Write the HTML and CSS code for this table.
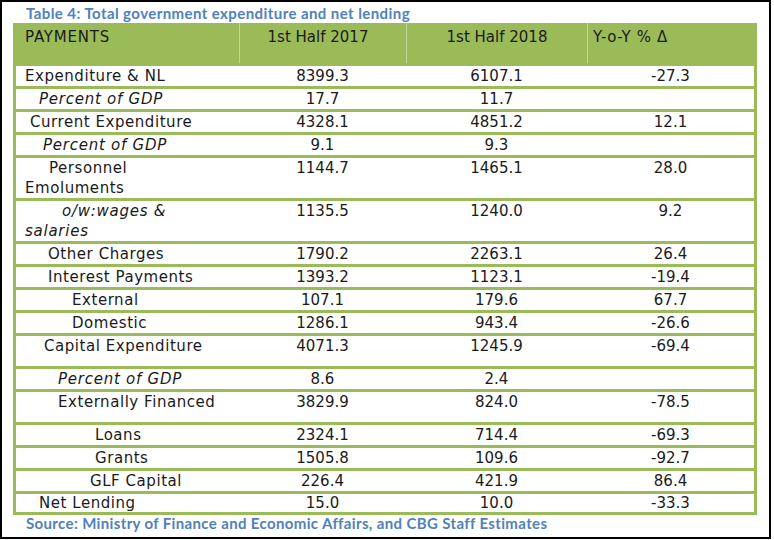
FILE: index.html
```html
<!DOCTYPE html>
<html lang="en">
<head>
<meta charset="utf-8">
<title>Table 4</title>
<link rel="stylesheet" href="styles.css">
</head>
<body>
<div class="frame">
  <p class="caption">Table 4: Total government expenditure and net lending</p>
  <table class="fin">
    <colgroup>
      <col class="c1"><col class="c2"><col class="c3"><col class="c4">
    </colgroup>
    <thead>
      <tr>
        <th class="h-label">PAYMENTS</th>
        <th class="h-y1">1st Half 2017</th>
        <th class="h-y2">1st Half 2018</th>
        <th class="h-yoy">Y-o-Y % Δ</th>
      </tr>
    </thead>
    <tbody>
      <tr><td class="lbl">Expenditure &amp; NL</td><td>8399.3</td><td>6107.1</td><td>-27.3</td></tr>
      <tr><td class="lbl it ind-14">Percent of GDP</td><td>17.7</td><td>11.7</td><td></td></tr>
      <tr><td class="lbl ind-5">Current Expenditure</td><td>4328.1</td><td>4851.2</td><td>12.1</td></tr>
      <tr><td class="lbl it ind-18">Percent of GDP</td><td>9.1</td><td>9.3</td><td></td></tr>
      <tr><td class="lbl ind-24">Personnel<br>Emoluments</td><td>1144.7</td><td>1465.1</td><td>28.0</td></tr>
      <tr><td class="lbl it ind-37">o/w:wages &amp;<br>salaries</td><td>1135.5</td><td>1240.0</td><td>9.2</td></tr>
      <tr><td class="lbl ind-23">Other Charges</td><td>1790.2</td><td>2263.1</td><td>26.4</td></tr>
      <tr><td class="lbl ind-23">Interest Payments</td><td>1393.2</td><td>1123.1</td><td>-19.4</td></tr>
      <tr><td class="lbl ind-47">External</td><td>107.1</td><td>179.6</td><td>67.7</td></tr>
      <tr><td class="lbl ind-47">Domestic</td><td>1286.1</td><td>943.4</td><td>-26.6</td></tr>
      <tr class="tall"><td class="lbl ind-19">Capital Expenditure</td><td>4071.3</td><td>1245.9</td><td>-69.4</td></tr>
      <tr><td class="lbl it ind-33">Percent of GDP</td><td>8.6</td><td>2.4</td><td></td></tr>
      <tr class="tall"><td class="lbl ind-33">Externally Financed</td><td>3829.9</td><td>824.0</td><td>-78.5</td></tr>
      <tr><td class="lbl ind-70">Loans</td><td>2324.1</td><td>714.4</td><td>-69.3</td></tr>
      <tr><td class="lbl ind-70">Grants</td><td>1505.8</td><td>109.6</td><td>-92.7</td></tr>
      <tr><td class="lbl ind-65">GLF Capital</td><td>226.4</td><td>421.9</td><td>86.4</td></tr>
      <tr class="last"><td class="lbl ind-14">Net Lending</td><td>15.0</td><td>10.0</td><td>-33.3</td></tr>
    </tbody>
  </table>
  <p class="source">Source: Ministry of Finance and Economic Affairs, and CBG Staff Estimates</p>
</div>
</body>
</html>
```

FILE: styles.css
```css
html, body {
  margin: 0;
  padding: 0;
  background: #ffffff;
}

.frame {
  width: 771px;
  height: 539px;
  box-sizing: border-box;
  border: 2px solid #000000;
  padding-left: 11px;
  background: #ffffff;
}

.caption,
.source {
  margin: 0;
  padding-left: 13px;
  font-family: Lato, "Open Sans", sans-serif;
  font-weight: 700;
  font-size: 15px;
  letter-spacing: 0.42px;
  color: #4f81bd;
  white-space: nowrap;
}

.caption {
  padding-top: 2px;
  line-height: 19px;
}

.source {
  line-height: 17px;
  letter-spacing: 0.36px;
}

.fin {
  width: 744px;
  table-layout: fixed;
  border-collapse: separate;
  border-spacing: 0;
  border: 3px solid #9bbb59;
  border-top: none;
  font-family: "DejaVu Sans", sans-serif;
  font-size: 15px;
  color: #1a1a1a;
}

.c1 { width: 223px; }
.c2 { width: 167px; }
.c3 { width: 181px; }
.c4 { width: 167px; }

.fin th {
  background: #9bbb59;
  font-weight: 400;
  line-height: 20px;
  height: 20px;
  padding: 4px 0 16px 0;
  vertical-align: top;
  text-align: center;
  white-space: nowrap;
}

.fin th + th {
  border-left: 1px solid #c3d79d;
}

.fin .h-label {
  text-align: left;
  padding-left: 9px;
  letter-spacing: 0.8px;
}

.fin .h-y1 {
  padding-right: 10px;
}

.fin .h-yoy {
  text-align: left;
  padding-left: 5px;
  letter-spacing: 0.6px;
}

.fin td {
  border-top: 3px solid #9bbb59;
  padding: 0;
  line-height: 20px;
  vertical-align: top;
  text-align: center;
  white-space: nowrap;
}

.fin td.lbl {
  text-align: left;
  padding-left: 9px;
  letter-spacing: 0.55px;
}

.fin td.lbl.it {
  letter-spacing: 0.75px;
}

.fin tr.tall td {
  padding-bottom: 10px;
}

.fin tr.last td {
  line-height: 18px;
}

.it { font-style: italic; }

.ind-5 { text-indent: 5px; }
.ind-14 { text-indent: 14px; }
.ind-18 { text-indent: 18px; }
.ind-19 { text-indent: 19px; }
.ind-23 { text-indent: 23px; }
.ind-24 { text-indent: 24px; }
.ind-33 { text-indent: 33px; }
.ind-37 { text-indent: 37px; }
.ind-47 { text-indent: 47px; }
.ind-65 { text-indent: 65px; }
.ind-70 { text-indent: 70px; }
```
